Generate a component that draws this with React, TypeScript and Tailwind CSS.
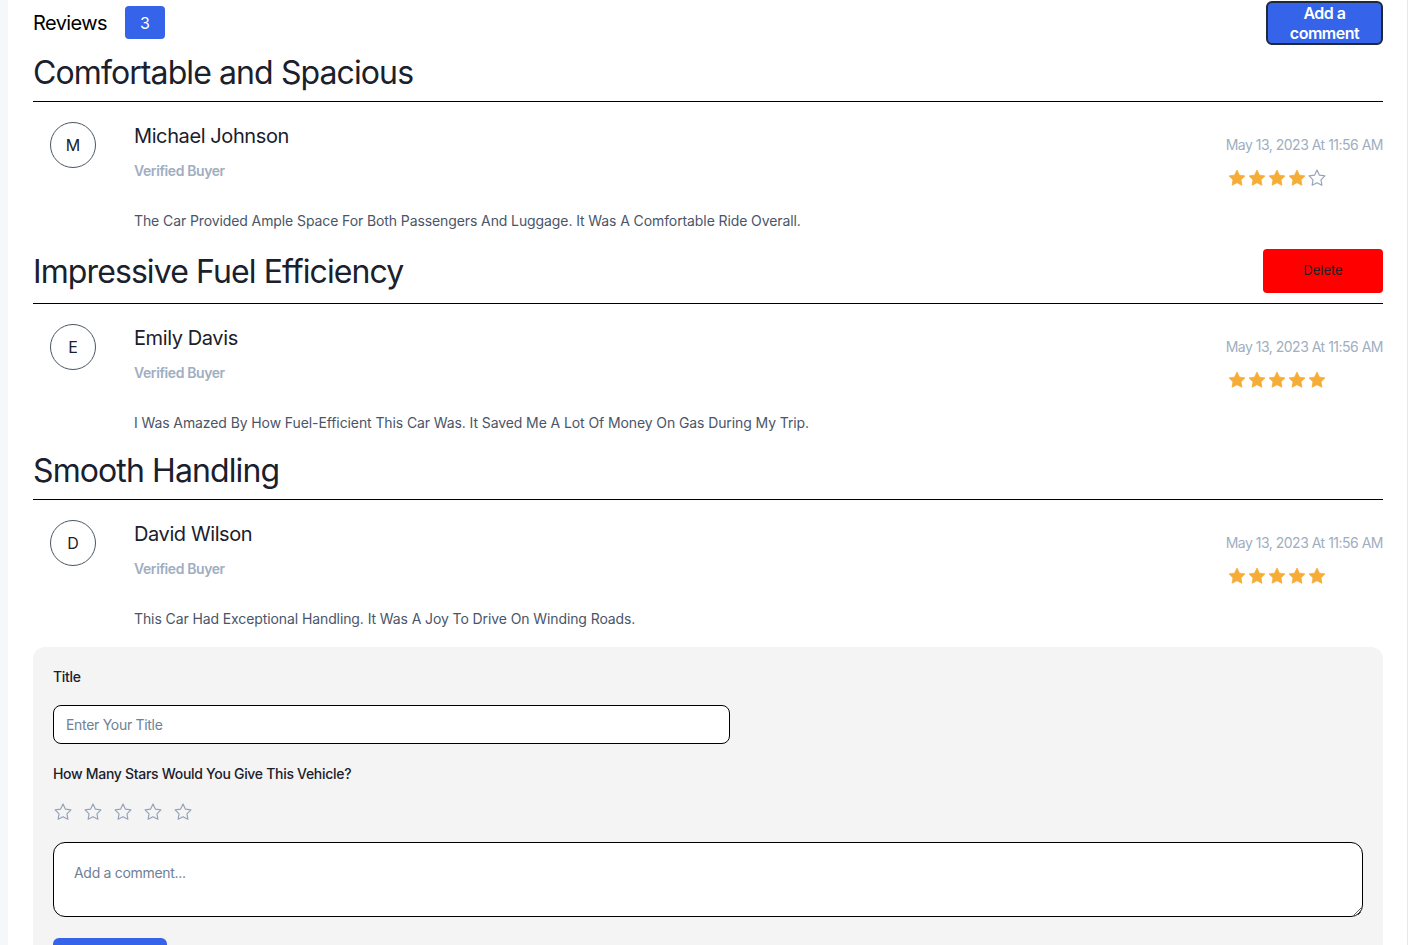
import { useState } from "react";

type Review = {
  title: string;
  name: string;
  date: string;
  stars: number;
  text: string;
  canDelete?: boolean;
};

const reviews: Review[] = [
  {
    title: "Comfortable and Spacious",
    name: "Michael Johnson",
    date: "May 13, 2023 At 11:56 AM",
    stars: 4,
    text: "The Car Provided Ample Space For Both Passengers And Luggage. It Was A Comfortable Ride Overall.",
  },
  {
    title: "Impressive Fuel Efficiency",
    name: "Emily Davis",
    date: "May 13, 2023 At 11:56 AM",
    stars: 5,
    text: "I Was Amazed By How Fuel-Efficient This Car Was. It Saved Me A Lot Of Money On Gas During My Trip.",
    canDelete: true,
  },
  {
    title: "Smooth Handling",
    name: "David Wilson",
    date: "May 13, 2023 At 11:56 AM",
    stars: 5,
    text: "This Car Had Exceptional Handling. It Was A Joy To Drive On Winding Roads.",
  },
];

const STAR =
  "M12 2.5l2.94 6.08 6.56.95-4.75 4.63 1.12 6.54L12 17.6l-5.87 3.1 1.12-6.54L2.5 9.53l6.56-.95L12 2.5z";

function Star({ filled }: { filled: boolean }) {
  return (
    <svg viewBox="0 0 24 24" className="h-5 w-5">
      <path
        d={STAR}
        fill={filled ? "#f6ad37" : "none"}
        stroke={filled ? "#f6ad37" : "#94a3b8"}
        strokeWidth={filled ? 1 : 1.4}
        strokeLinejoin="round"
      />
    </svg>
  );
}

function ReviewBlock({ r }: { r: Review }) {
  return (
    <div>
      <div className="flex items-center justify-between border-b border-black pb-2">
        <h2 className="text-[32px] leading-10 tracking-[-0.9px] text-[#1a202c]">{r.title}</h2>
        {r.canDelete && (
          <button className="mb-0.5 h-11 w-[120px] rounded bg-[#ff0000] text-[13px] text-[#222]">
            Delete
          </button>
        )}
      </div>
      <div className="flex pt-5">
        <div className="ml-[17px] flex h-[46px] w-[46px] shrink-0 items-center justify-center rounded-full border border-[#4b5563] text-base text-[#1a202c]">
          {r.name[0]}
        </div>
        <div className="ml-[38px] flex-1">
          <div className="text-xl leading-7 tracking-[-0.4px] text-[#1a202c]">{r.name}</div>
          <div className="mt-[11px] text-sm font-semibold leading-5 tracking-[-0.4px] text-[#a0aec0]">
            Verified Buyer
          </div>
          <p className="mt-[30px] text-sm leading-5 tracking-[-0.1px] text-[#4a5568]">{r.text}</p>
        </div>
        <div className="mt-[13px] flex flex-col items-start">
          <div className="text-sm leading-5 tracking-[-0.5px] text-[#a0aec0]">{r.date}</div>
          <div className="mt-[13px] ml-px flex">
            {[0, 1, 2, 3, 4].map((i) => (
              <Star key={i} filled={i < r.stars} />
            ))}
          </div>
        </div>
      </div>
    </div>
  );
}

export default function App() {
  const [rating, setRating] = useState(0);

  return (
    <div
      className="min-h-screen bg-[#f6f7f9] pl-2"
      style={{ fontFamily: "Inter, 'Noto Sans', sans-serif" }}
    >
      <div className="min-h-screen border-r border-[#e5e7eb] bg-white pr-6 pl-[25px]">
        <div className="flex items-start justify-between pt-px">
          <div className="mt-[5px] flex items-center gap-[18px]">
            <span className="text-xl tracking-[-0.6px] text-black">Reviews</span>
            <span className="flex h-[33px] w-10 items-center justify-center rounded bg-[#3563e9] text-base text-white">
              {reviews.length}
            </span>
          </div>
          <button className="h-[44px] w-[117px] rounded-md border-2 border-[#1f2937] bg-[#3563e9] text-base font-semibold leading-[20px] tracking-[-0.5px] text-white">
            Add a<br />
            comment
          </button>
        </div>

        <div className="mt-2 flex flex-col gap-[18px]">
          {reviews.map((r) => (
            <ReviewBlock key={r.title} r={r} />
          ))}

          <div className="rounded-t-xl bg-[#f4f4f4] px-5 pt-5 pb-4">
            <label className="block text-sm font-medium leading-5 tracking-[-0.3px] text-[#1a202c]">
              Title
            </label>
            <input
              placeholder="Enter Your Title"
              className="mt-[18px] h-[39px] w-[677px] rounded-lg border border-black bg-white px-3 text-sm tracking-[-0.3px] placeholder:text-[#718096] outline-none"
            />
            <div className="mt-5 text-sm font-medium leading-5 tracking-[-0.3px] text-[#1a202c]">
              How Many Stars Would You Give This Vehicle?
            </div>
            <div className="mt-[18px] flex gap-2.5">
              {[1, 2, 3, 4, 5].map((i) => (
                <button key={i} onClick={() => setRating(i)}>
                  <Star filled={i <= rating} />
                </button>
              ))}
            </div>
            <textarea
              placeholder="Add a comment..."
              className="mt-5 block h-[75px] w-full rounded-xl border border-black bg-white px-5 py-5 text-sm tracking-[-0.3px] placeholder:text-[#718096] outline-none"
            />
            <button className="mt-[21px] h-12 w-[114px] rounded-md bg-[#3563e9] text-sm font-semibold text-white">
              Submit
            </button>
          </div>
        </div>
      </div>
    </div>
  );
}
